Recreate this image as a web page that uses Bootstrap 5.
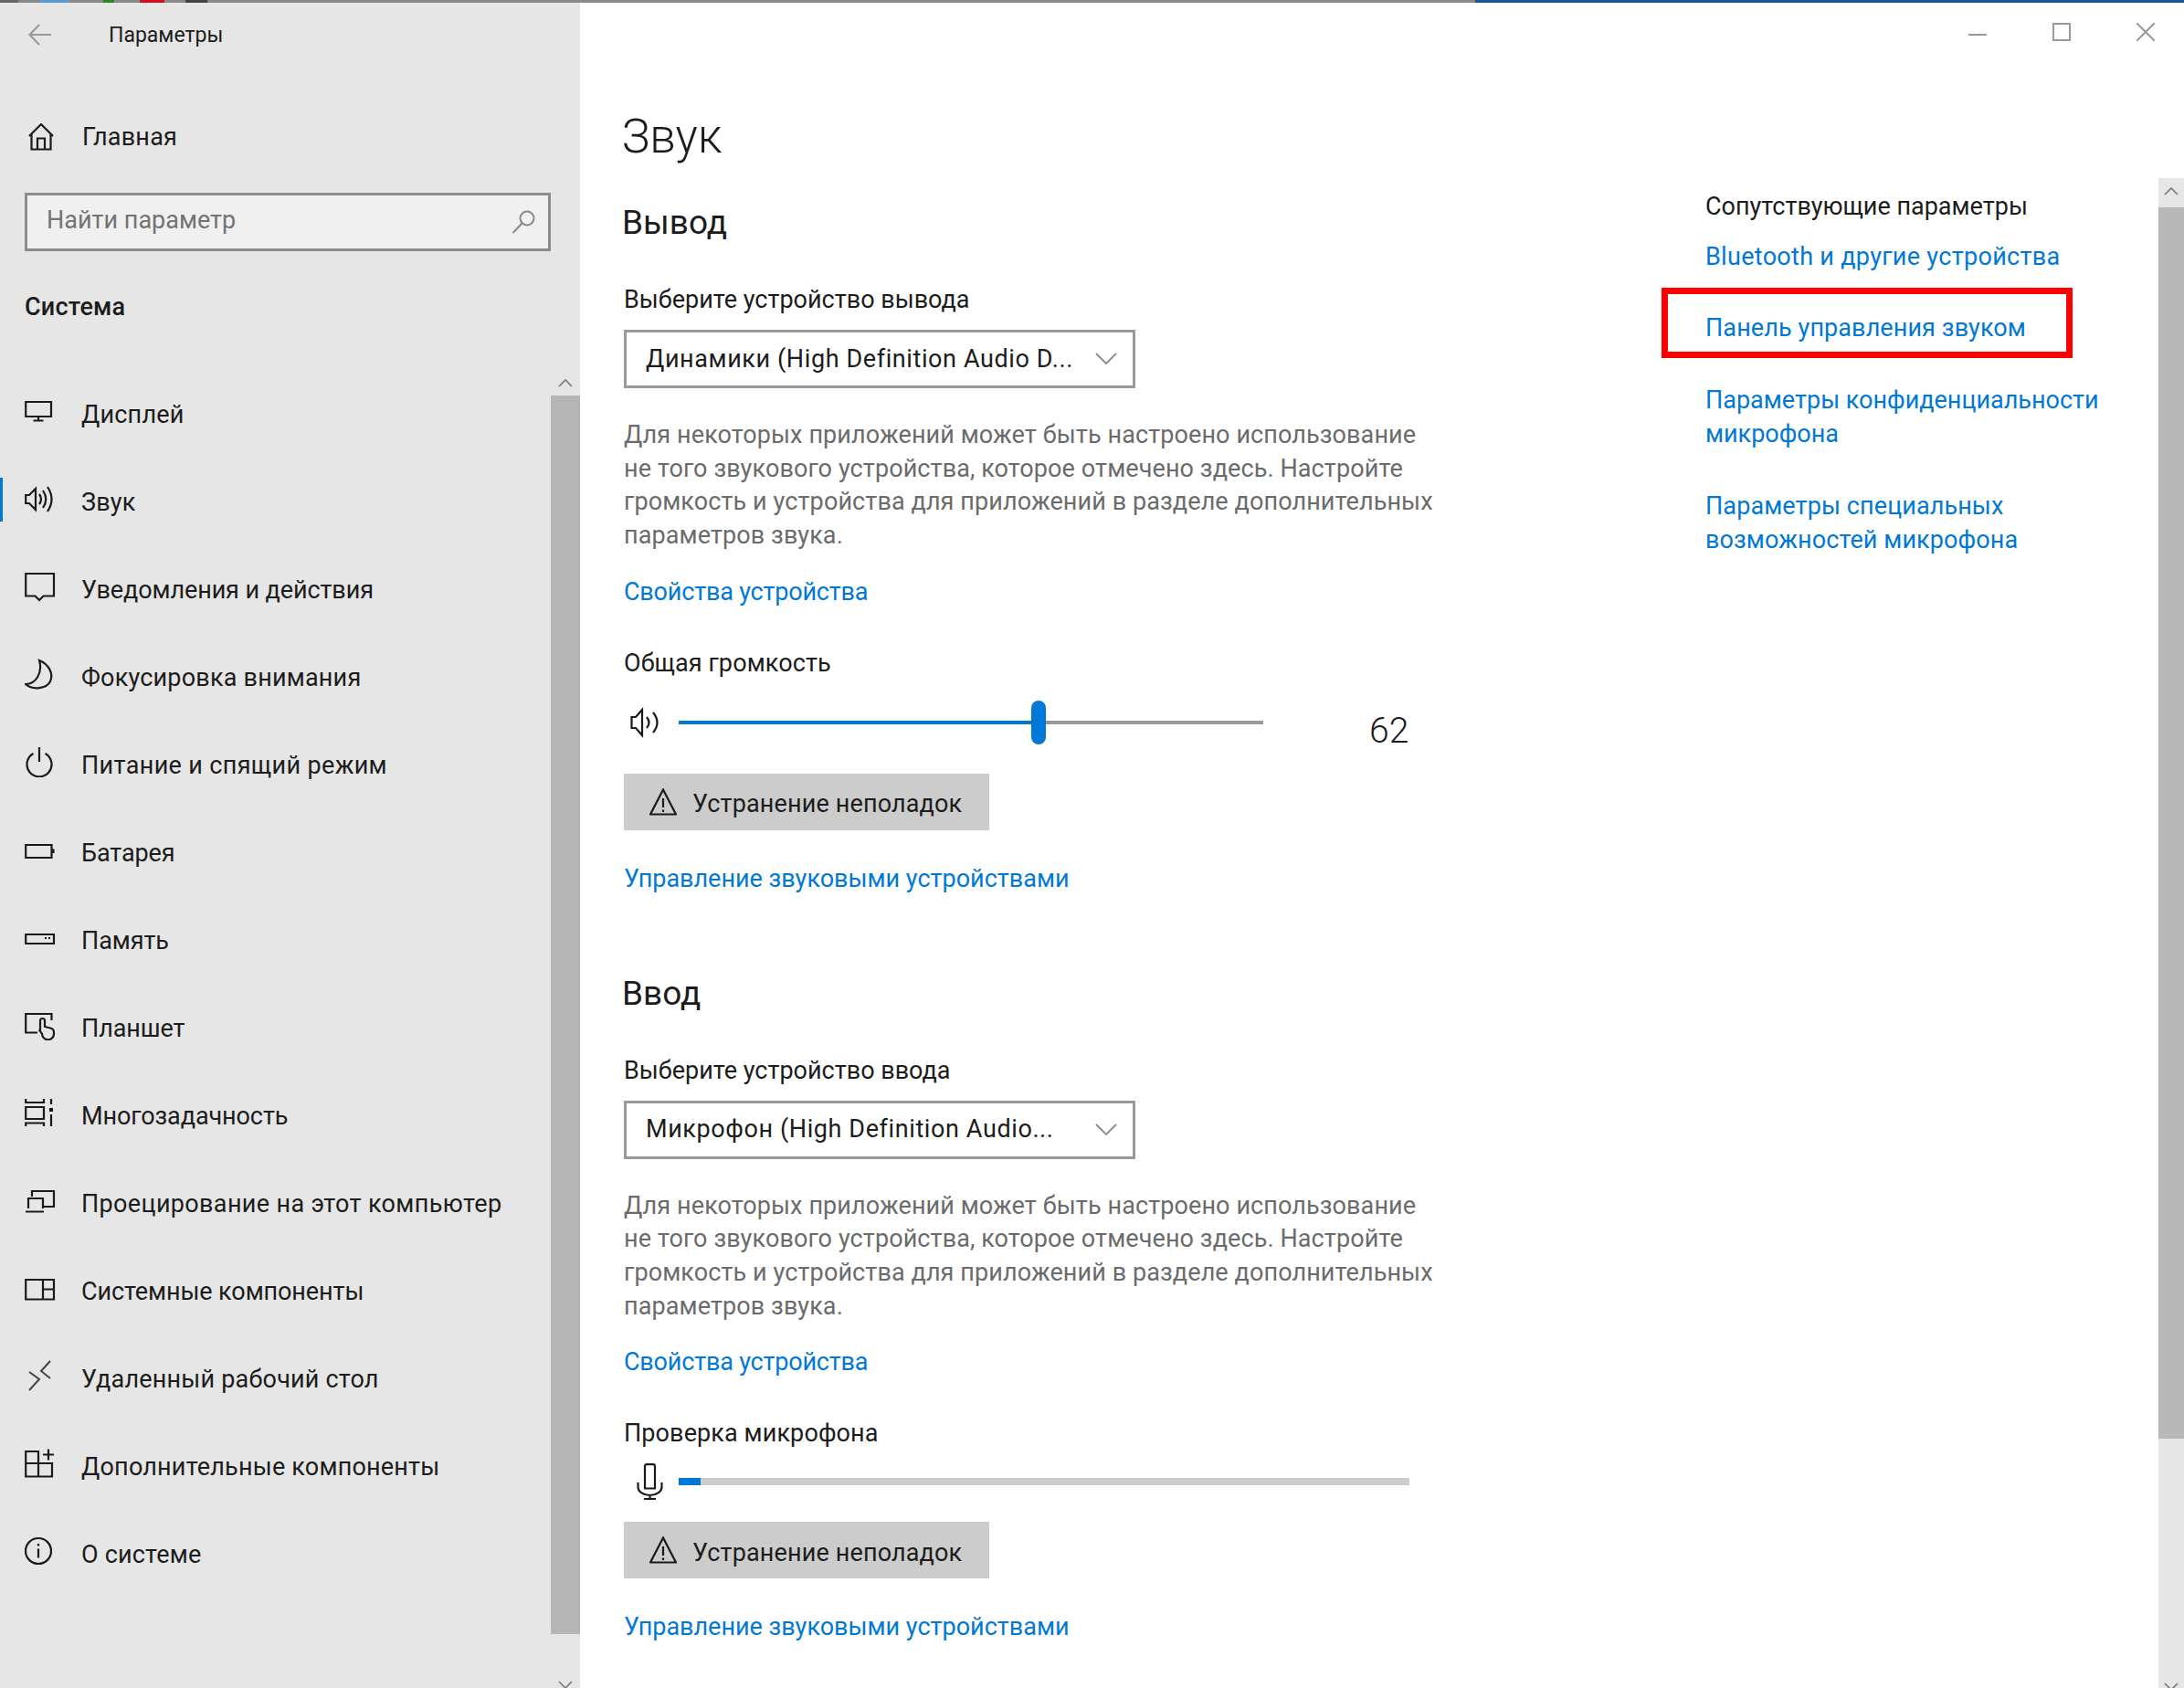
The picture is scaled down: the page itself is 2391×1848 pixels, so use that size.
<!DOCTYPE html>
<html lang="ru"><head><meta charset="utf-8"><title>Параметры</title>
<link rel="stylesheet" href="https://cdn.jsdelivr.net/npm/bootstrap@5.3.0/dist/css/bootstrap.min.css">
<style>
html,body{height:1848px;overflow:hidden}
body{font-family:Roboto,"Liberation Sans",sans-serif;font-size:27px;line-height:37px;color:#1c1c1c;background:#fff}
svg{display:block;flex:none;fill:none;stroke:#1a1a1a;stroke-width:2.2}
.top-strip{height:3px;background:linear-gradient(to right,#666 0 20px,#8a8a8a 20px 43px,#5b9bd5 43px 75px,#8a8a8a 75px 113px,#2a8a2a 113px 125px,#8a8a8a 125px 153px,#d01020 153px 180px,#8a8a8a 180px 203px,#444 203px 227px,#8a8a8a 227px 1615px,#1a56a0 1615px)}
.app{height:1845px}
.side{width:635px;background:#e6e6e6}
.side-body{width:603px;letter-spacing:.2px}
.title-row{height:69px;padding-left:31px}
.title-row span{margin-left:62px;font-size:23px;letter-spacing:0;padding-top:1px}
.back{stroke:#9a9a9a}
.home-row{height:96px;margin-top:30px;padding-left:31px;color:#1c1c1c}
.home-row span{margin-left:31px}
.find{margin:13px 0 0 27px;height:64px;width:576px;background:#f0f0f0;border:3px solid #8c8c8c;padding:0 14px 3px 21px}
.find input{background:transparent;border:0;padding:0;font:inherit;color:#6e6e6e;box-shadow:none}
.find input::placeholder{color:#737373;opacity:1}
.find svg{stroke:#8a8a8a;stroke-width:2;margin-top:3px}
.sys-head{height:48px;line-height:48px;margin:37px 0 45px 27px;font-weight:500}
.nav-row{height:96px;padding:0 0 0 27px;color:#1c1c1c;position:relative}
.nav-row:hover{color:#1c1c1c}
.nav-row svg{margin-top:-6px}
.nav-row span{margin-left:28px;padding-top:2px}
.nav-row.on::before{content:"";position:absolute;left:0;top:22px;width:3px;height:48px;background:#0078d7}
.tg{letter-spacing:-.1px}
.wd{letter-spacing:.35px}
.sbar{width:32px;padding-top:412px}
.sbar svg,.mbar svg{stroke:#777;stroke-width:1.6}
.sbar .up{margin:0 0 9px 8px}
.sthumb{width:32px;height:1356px;background:#b5b5b5}
.sbar .down{margin:51px 0 0 8px}
.wbar{flex:none;height:69px;padding:22px 32px 0 0}
.wbar svg{stroke:#999;stroke-width:2}
.wgap{gap:72px}
.mainrow{min-height:0}
.left{flex:none;width:1232px;padding-top:40px;padding-left:48px}
.h-big{font-size:51px;font-weight:300;line-height:72px;height:72px;margin:1.5px 0 30.5px -2px}
.h-sec{font-size:37px;font-weight:400;line-height:56px;height:56px;margin:0 0 38px -2px}
.lbl{height:37px;margin:0}
.dd{width:560px;height:64px;border:3px solid #999;margin-top:14px;padding:0 17px 0 21px;background:#fff;border-radius:0;color:#1c1c1c;letter-spacing:.6px}
.dd svg{stroke:#8a8a8a;stroke-width:1.8}
.note{color:#6b6b6b;line-height:36.67px;margin:33px 0 25px;letter-spacing:.1px}
.lnk{color:#0078d7;text-decoration:none}
.lnk:hover{color:#0078d7}
.lnk-n{letter-spacing:-.2px}
.lbl2{margin-top:41px;letter-spacing:.1px}
.vol-row{height:48px;margin-top:22px;padding-left:7px}
.vol-icon{margin-right:19px}
.track{width:640px;height:4px;background:#999;position:relative}
.track-on{width:395px;height:4px;background:#0078d7}
.thumbx{position:absolute;left:386px;top:-22px;width:16px;height:48px;border-radius:8px;background:#0078d7}
.vol-num{font-size:39px;font-weight:300;margin:19px 0 0 116px;line-height:37px}
.trb{width:400px;height:62px;background:#ccc;border:0;border-radius:0;padding:0 0 0 28px;color:#1c1c1c;font-size:27px;gap:17px;letter-spacing:.15px}
.trb span{padding-top:5px}
.trb:hover,.trb:active{background:#ccc}
.trb1{margin-top:32px}
.trb2{margin-top:24px}
.lnk-b{display:block;margin-top:35px;height:37px}
.sec2{margin-top:79px}
.mic-row{height:40px;margin-top:14px;padding-left:14px}
.mic-row svg{margin-right:17px}
.meter{width:800px;height:8px;margin-top:16px;background:#ccc;border-radius:0}
.meter .progress-bar{background:#0078d7}
.right{width:496px;padding-top:136px}
.right .lnk{display:block}
.lnk-w{letter-spacing:.3px}
.mt-a{margin-top:17.5px}
.redbox{width:450px;height:77px;margin:15.5px 0 0 -48px;border:7px solid #f00;padding:18.5px 0 0 41px;letter-spacing:.1px}
.mt-b{margin-top:28px}
.mt-c{margin-top:42px;letter-spacing:.1px}
.mbar{width:28px;margin-top:123px;background:#e6e6e6}
.mup{height:32px;padding:10px 0 0 6px}
.mthumb{height:1348px;background:#b8b8b8}
.mbar .down{margin:267px 0 0 6px}
</style></head><body>
<div class="top-strip"></div>
<div class="app d-flex">
<aside class="side d-flex">
<div class="side-body">
<div class="title-row d-flex align-items-center">
<svg class="back" width="26" height="26" viewBox="0 0 26 26"><path d="M25 13H2M12 2 1.500 13 12 24"/></svg>
<span>Параметры</span></div>
<a class="home-row d-flex align-items-center" href="#" style="text-decoration:none">
<svg width="28" height="30" viewBox="0 0 28 30"><path d="M1 14 14 1l13 13M3.500 11.500V28.500H24.500V11.500M10 28.500V16.500H18V28.500"/></svg>
<span>Главная</span></a>
<div class="find d-flex align-items-center">
<input class="form-control" placeholder="Найти параметр">
<svg width="26" height="26" viewBox="0 0 26 26"><circle cx="17" cy="9" r="7.500"/><path d="M11.500 14.500 1.500 25"/></svg>
</div>
<div class="sys-head">Система</div>
<nav class="nav flex-column">
<a class="nav-link nav-row d-flex align-items-center" href="#"><svg width="34" height="34" viewBox="0 0 34 34"><path d="M1.200 7H29V23H1.200ZM15 23v4M9.500 27.500h11"/></svg><span>Дисплей</span></a>
<a class="nav-link nav-row on d-flex align-items-center" href="#"><svg width="34" height="34" viewBox="0 0 34 34"><path d="M1.200 13H5L12 6V29L5 22H1.200ZM16 12q4 5.500 0 11M20 8q6.500 9.500 0 19M25 4q9 13.500 0 27"/></svg><span>Звук</span></a>
<a class="nav-link nav-row d-flex align-items-center" href="#"><svg width="34" height="34" viewBox="0 0 34 34"><path d="M1.200 3H32V27.500H20.500L16 32 11.500 27.500H1.200Z"/></svg><span class="tg">Уведомления и действия</span></a>
<a class="nav-link nav-row d-flex align-items-center" href="#"><svg width="34" height="34" viewBox="0 0 34 34"><path d="M16 2C26 6 32 16 28 25 24 33 9 35 1 28 12 28 20 16 16 2Z"/></svg><span>Фокусировка внимания</span></a>
<a class="nav-link nav-row d-flex align-items-center" href="#"><svg width="34" height="34" viewBox="0 0 34 34"><path d="M9.500 8A13.500 13.500 0 1 0 22.500 8M16 1V17"/></svg><span class="wd">Питание и спящий режим</span></a>
<a class="nav-link nav-row d-flex align-items-center" href="#"><svg width="34" height="34" viewBox="0 0 34 34"><path d="M1.200 12H29.500V26H1.200ZM31.500 16.500V21"/></svg><span class="tg">Батарея</span></a>
<a class="nav-link nav-row d-flex align-items-center" href="#"><svg width="34" height="34" viewBox="0 0 34 34"><path d="M1.200 14H32V24H1.200ZM22 18h2M26 18h2"/></svg><span class="tg">Память</span></a>
<a class="nav-link nav-row d-flex align-items-center" href="#"><svg width="34" height="34" viewBox="0 0 34 34"><path d="M14 25.500H1.200V5H29.500V12M17 23V12.500a2.500 2.500 0 0 1 5 0V19l6 1.500q4 1 4 4.500v1.500a6.500 6.500 0 0 1-13 .5q-1-2.500-3.500-4.500"/></svg><span class="tg">Планшет</span></a>
<a class="nav-link nav-row d-flex align-items-center" href="#"><svg width="34" height="34" viewBox="0 0 34 34"><path d="M1.200 2V6H21V2M1.200 11H21V24H1.200ZM1.200 32V28.500H21V32M29 2V8M29 19V32"/><path d="M27 12h4v4h-4z" fill="#1a1a1a" stroke="none"/></svg><span class="tg">Многозадачность</span></a>
<a class="nav-link nav-row d-flex align-items-center" href="#"><svg width="34" height="34" viewBox="0 0 34 34"><path d="M8 13V7H32V24H21M4 26V15H20V26M1 29.500H21"/></svg><span class="wd">Проецирование на этот компьютер</span></a>
<a class="nav-link nav-row d-flex align-items-center" href="#"><svg width="34" height="34" viewBox="0 0 34 34"><path d="M1.200 8H32V29.500H1.200ZM20 8V29.500M20 18.500H32"/></svg><span class="tg">Системные компоненты</span></a>
<a class="nav-link nav-row d-flex align-items-center" href="#"><svg width="34" height="34" viewBox="0 0 34 34" style="stroke:#444;stroke-width:2"><path d="M5 13 16 21 5 33M28 1 18 12 28 20"/></svg><span>Удаленный рабочий стол</span></a>
<a class="nav-link nav-row d-flex align-items-center" href="#"><svg width="34" height="34" viewBox="0 0 34 34"><path d="M1.200 17H30V31.500H1.200ZM1.200 17V4H15V31.500M20 7.500H32M26 1.500V13.500"/></svg><span>Дополнительные компоненты</span></a>
<a class="nav-link nav-row d-flex align-items-center" href="#"><svg width="34" height="34" viewBox="0 0 34 34"><circle cx="15" cy="17" r="14"/><path d="M15 14.500V24.500M15 9V11.500"/></svg><span>О системе</span></a>
</nav>
</div>
<div class="sbar">
<svg class="up" width="16" height="9" viewBox="0 0 16 9"><path d="M1 8 8 1l7 7"/></svg>
<div class="sthumb"></div>
<svg class="down" width="16" height="9" viewBox="0 0 16 9"><path d="M1 1l7 7 7-7"/></svg>
</div>
</aside>
<main class="flex-grow-1 d-flex flex-column">
<div class="wbar d-flex justify-content-end wgap">
<svg width="20" height="20" viewBox="0 0 20 20"><path d="M0 13H20"/></svg>
<svg width="20" height="20" viewBox="0 0 20 20"><path d="M1 1H19V19H1Z"/></svg>
<svg width="20" height="20" viewBox="0 0 20 20"><path d="M0 0 20 20M20 0 0 20"/></svg>
</div>
<div class="mainrow d-flex flex-grow-1">
<div class="left">
<h1 class="h-big">Звук</h1>
<h2 class="h-sec">Вывод</h2>
<p class="lbl">Выберите устройство вывода</p>
<div class="dd d-flex align-items-center justify-content-between"><span>Динамики (High Definition Audio D...</span><svg width="24" height="14" viewBox="0 0 24 14"><path d="M1 1l11 11L23 1"/></svg></div>
<p class="note">Для некоторых приложений может быть настроено использование<br>не того звукового устройства, которое отмечено здесь. Настройте<br>громкость и устройства для приложений в разделе дополнительных<br>параметров звука.</p>
<a class="lnk lnk-n d-block" href="#">Свойства устройства</a>
<p class="lbl lbl2">Общая громкость</p>
<div class="vol-row d-flex align-items-center">
<svg class="vol-icon" width="34" height="34" viewBox="0 0 34 34"><path d="M1.500 11H6L13 3V31L6 23H1.500ZM18 11q5 6 0 12M25 6q9 11 0 22"/></svg>
<div class="track"><div class="track-on"></div><div class="thumbx"></div></div>
<div class="vol-num">62</div>
</div>
<button class="btn trb trb1 d-flex align-items-center" type="button"><svg width="30" height="30" viewBox="0 0 30 30"><path d="M15 1.500 29 28.500H1ZM15 11V21M15 23.500V26"/></svg><span>Устранение неполадок</span></button>
<a class="lnk lnk-b" href="#">Управление звуковыми устройствами</a>
<h2 class="h-sec sec2">Ввод</h2>
<p class="lbl">Выберите устройство ввода</p>
<div class="dd d-flex align-items-center justify-content-between"><span>Микрофон (High Definition Audio...</span><svg width="24" height="14" viewBox="0 0 24 14"><path d="M1 1l11 11L23 1"/></svg></div>
<p class="note">Для некоторых приложений может быть настроено использование<br>не того звукового устройства, которое отмечено здесь. Настройте<br>громкость и устройства для приложений в разделе дополнительных<br>параметров звука.</p>
<a class="lnk lnk-n d-block" href="#">Свойства устройства</a>
<p class="lbl lbl2">Проверка микрофона</p>
<div class="mic-row d-flex align-items-start">
<svg width="29" height="40" viewBox="0 0 29 40"><path d="M9 2.500A2 2 0 0 1 11 1.200H18A2 2 0 0 1 20 3V27.500H9ZM1.500 21V26A13 9 0 0 0 27.500 26V21M14.500 35V39M8 39H21" transform="translate(0 0)"/></svg>
<div class="progress meter"><div class="progress-bar" style="width:3%"></div></div>
</div>
<button class="btn trb trb2 d-flex align-items-center" type="button"><svg width="30" height="30" viewBox="0 0 30 30"><path d="M15 1.500 29 28.500H1ZM15 11V21M15 23.500V26"/></svg><span>Устранение неполадок</span></button>
<a class="lnk lnk-b" href="#">Управление звуковыми устройствами</a>
</div>
<div class="right">
<div>Сопутствующие параметры</div>
<a class="lnk lnk-w mt-a" href="#">Bluetooth и другие устройства</a>
<div class="redbox"><a class="lnk" href="#">Панель управления звуком</a></div>
<a class="lnk mt-b" href="#">Параметры конфиденциальности<br>микрофона</a>
<a class="lnk mt-c" href="#">Параметры специальных<br>возможностей микрофона</a>
</div>
<div class="flex-grow-1"></div>
<div class="mbar">
<div class="mup"><svg width="16" height="9" viewBox="0 0 16 9"><path d="M1 8 8 1l7 7"/></svg></div>
<div class="mthumb"></div>
<svg class="down" width="16" height="9" viewBox="0 0 16 9"><path d="M1 1l7 7 7-7"/></svg>
</div>
</div>
</main>
</div>
<script src="https://cdn.jsdelivr.net/npm/bootstrap@5.3.0/dist/js/bootstrap.bundle.min.js"></script>
</body></html>
